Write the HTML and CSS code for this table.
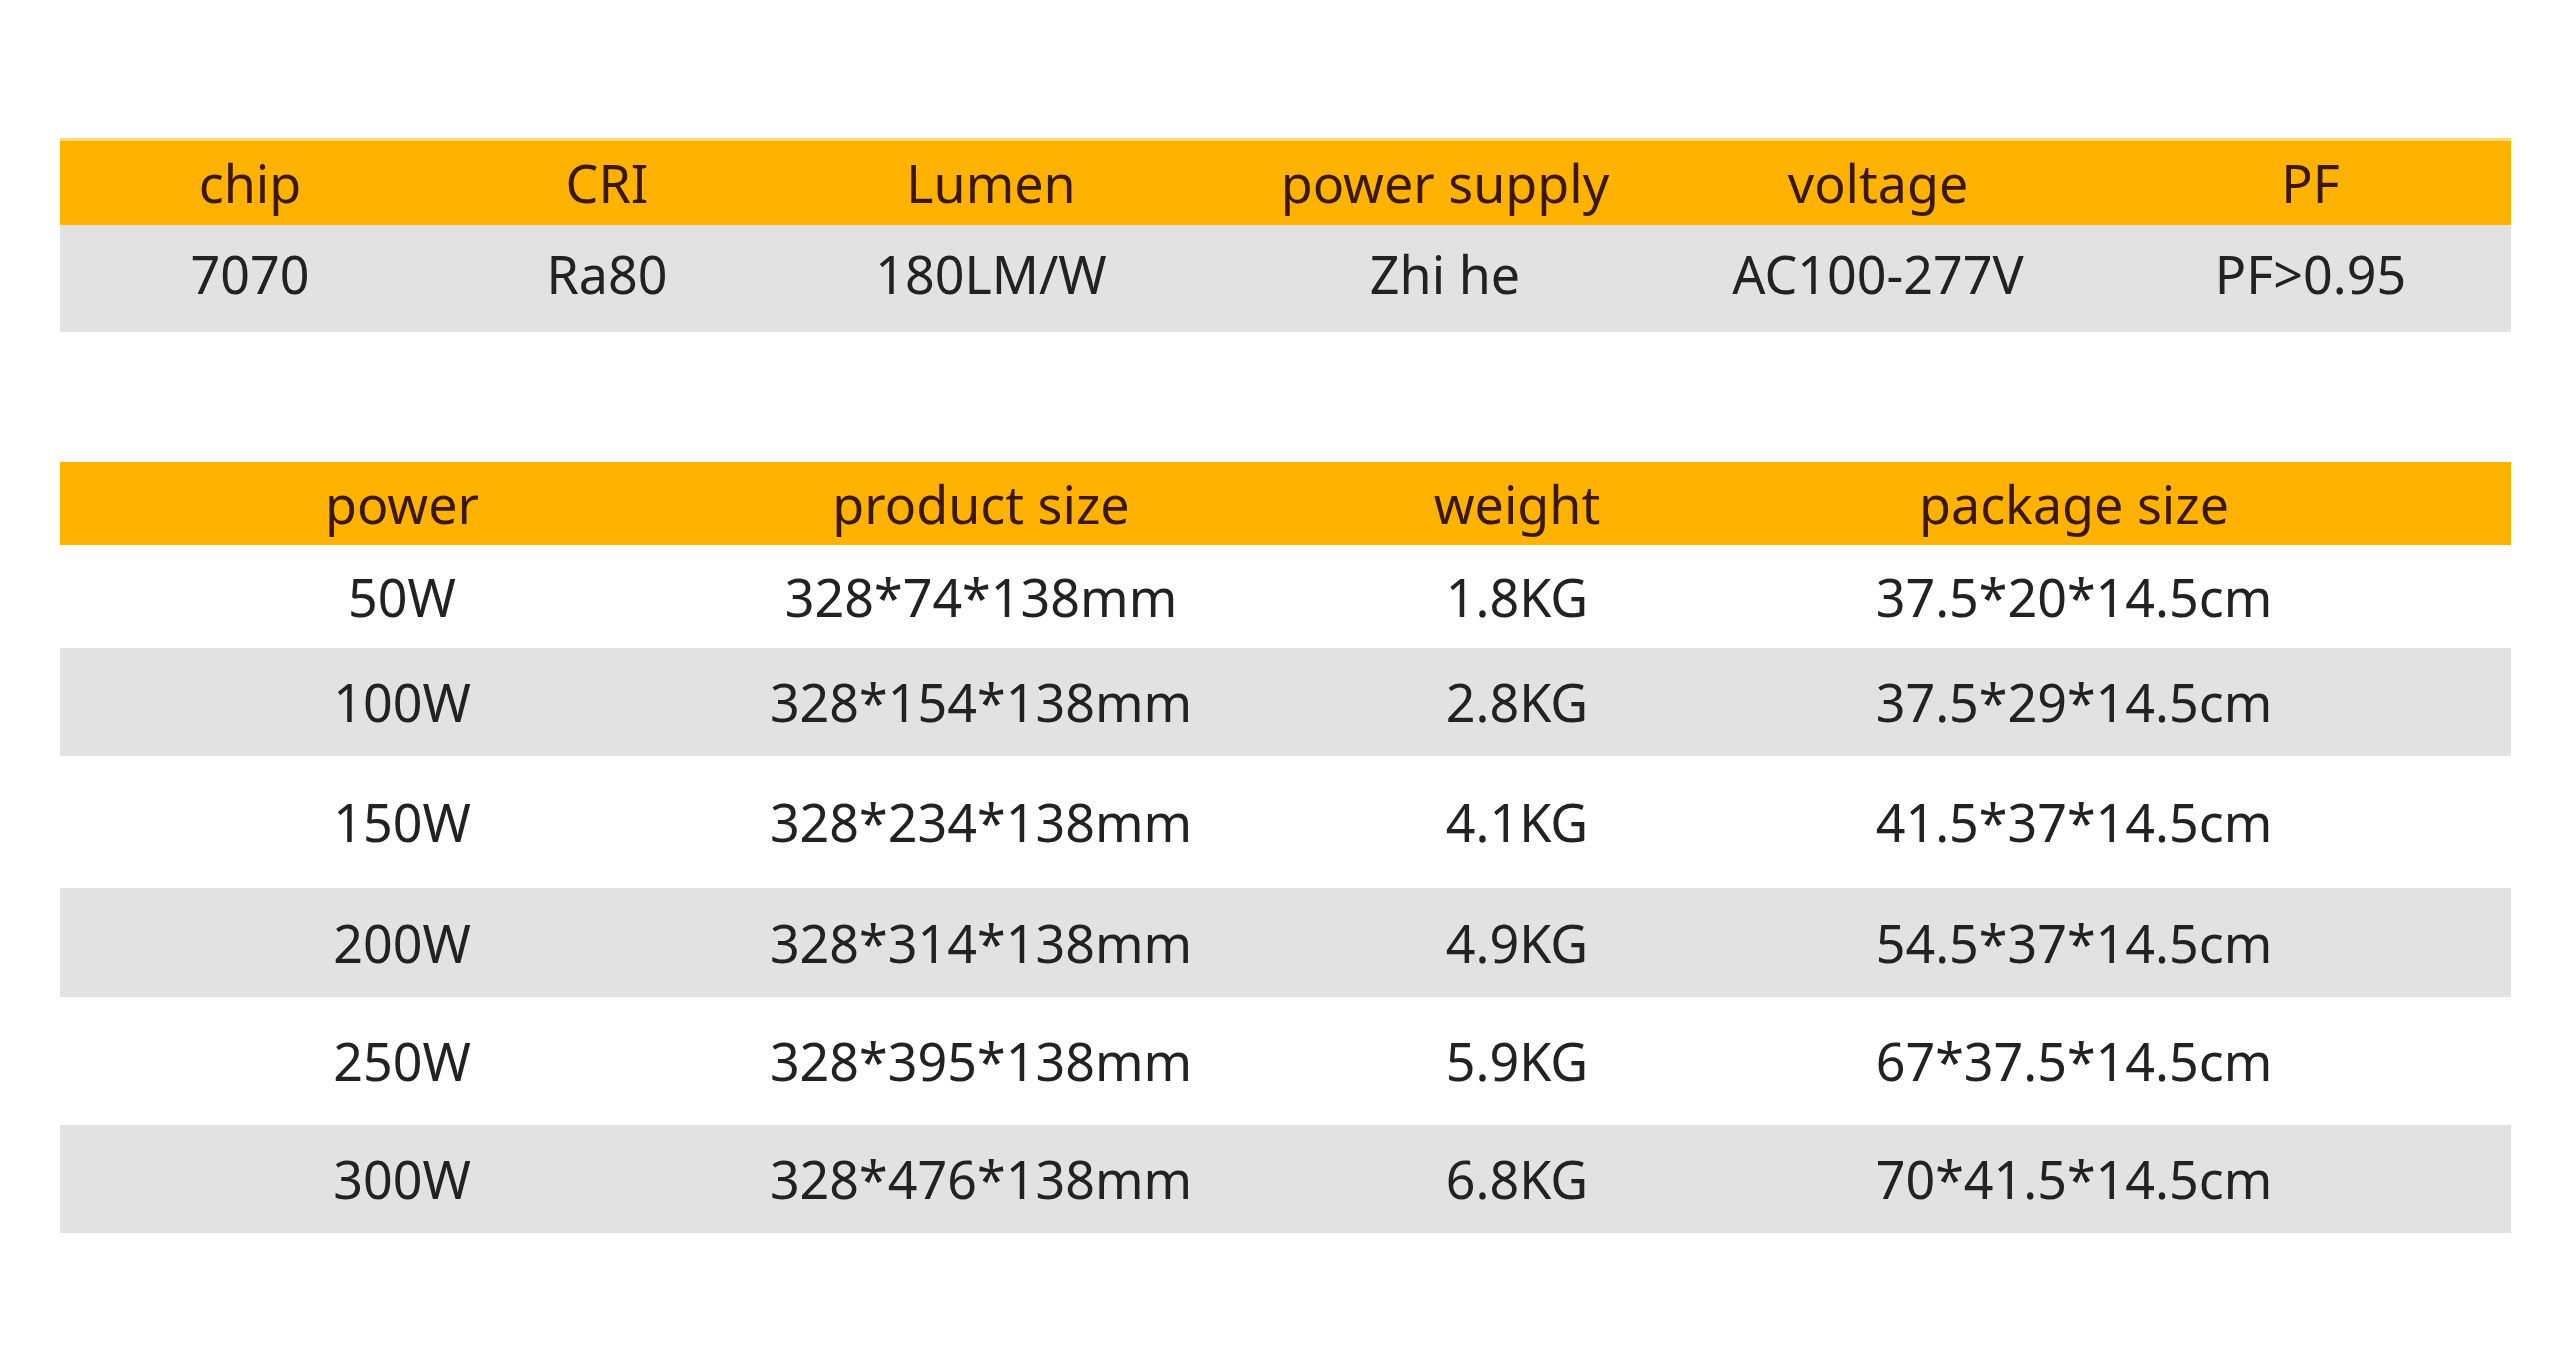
FILE: index.html
```html
<!DOCTYPE html>
<html lang="en">
<head>
<meta charset="utf-8">
<title>Specifications</title>
<link rel="stylesheet" href="styles.css">
</head>
<body>
<main class="page">
  <section class="spec spec-main">
    <div class="row head">
      <div class="cell">chip</div>
      <div class="cell">CRI</div>
      <div class="cell">Lumen</div>
      <div class="cell">power supply</div>
      <div class="cell">voltage</div>
      <div class="cell last">PF</div>
    </div>
    <div class="row grey data">
      <div class="cell">7070</div>
      <div class="cell">Ra80</div>
      <div class="cell">180LM/W</div>
      <div class="cell">Zhi he</div>
      <div class="cell">AC100-277V</div>
      <div class="cell last">PF&gt;0.95</div>
    </div>
  </section>

  <section class="spec spec-size">
    <div class="row head">
      <div class="cell">power</div>
      <div class="cell">product size</div>
      <div class="cell">weight</div>
      <div class="cell">package size</div>
      <div class="cell"></div>
    </div>
    <div class="row body r1">
      <div class="cell">50W</div>
      <div class="cell">328*74*138mm</div>
      <div class="cell">1.8KG</div>
      <div class="cell">37.5*20*14.5cm</div>
      <div class="cell"></div>
    </div>
    <div class="row body grey r2">
      <div class="cell">100W</div>
      <div class="cell">328*154*138mm</div>
      <div class="cell">2.8KG</div>
      <div class="cell">37.5*29*14.5cm</div>
      <div class="cell"></div>
    </div>
    <div class="row body r3">
      <div class="cell">150W</div>
      <div class="cell">328*234*138mm</div>
      <div class="cell">4.1KG</div>
      <div class="cell">41.5*37*14.5cm</div>
      <div class="cell"></div>
    </div>
    <div class="row body grey r4">
      <div class="cell">200W</div>
      <div class="cell">328*314*138mm</div>
      <div class="cell">4.9KG</div>
      <div class="cell">54.5*37*14.5cm</div>
      <div class="cell"></div>
    </div>
    <div class="row body r5">
      <div class="cell">250W</div>
      <div class="cell">328*395*138mm</div>
      <div class="cell">5.9KG</div>
      <div class="cell">67*37.5*14.5cm</div>
      <div class="cell"></div>
    </div>
    <div class="row body grey r6">
      <div class="cell">300W</div>
      <div class="cell">328*476*138mm</div>
      <div class="cell">6.8KG</div>
      <div class="cell">70*41.5*14.5cm</div>
      <div class="cell"></div>
    </div>
  </section>
</main>
</body>
</html>
```

FILE: styles.css
```css
html, body {
  margin: 0;
  padding: 0;
  background: #ffffff;
}

body {
  width: 2560px;
  height: 1359px;
  overflow: hidden;
  font-family: "Noto Sans", "DejaVu Sans", sans-serif;
  font-size: 52px;
  color: #222222;
}

.page {
  padding: 141px 0 0 60px;
  width: 2451px;
}

.spec {
  display: flex;
  flex-direction: column;
}

.spec-size {
  margin-top: 130px;
}

.row {
  display: grid;
  align-items: center;
}

.spec-main .row {
  grid-template-columns: 380px 334px 434px 474px 392px 1fr;
}

.spec-size .row {
  grid-template-columns: 684px 474px 598px 516px 1fr;
}

.cell {
  text-align: center;
  white-space: nowrap;
  line-height: 1;
}

.spec-main .cell.last {
  padding-left: 36px;
}

.head {
  background: #ffb300;
  color: #3b1800;
}

.spec-main .head {
  height: 84px;
  box-shadow: 0 -3px 0 #ffd877;
}

.spec-main .data {
  box-sizing: border-box;
  height: 107px;
  padding-bottom: 10px;
}

.spec-size .head {
  height: 83px;
}

.grey {
  background: #e2e2e2;
}

.r1 { height: 103px; }
.r2 { height: 108px; }
.r3 { height: 132px; }
.r4 { height: 109px; }
.r5 { height: 128px; }
.r6 { height: 108px; }
```
